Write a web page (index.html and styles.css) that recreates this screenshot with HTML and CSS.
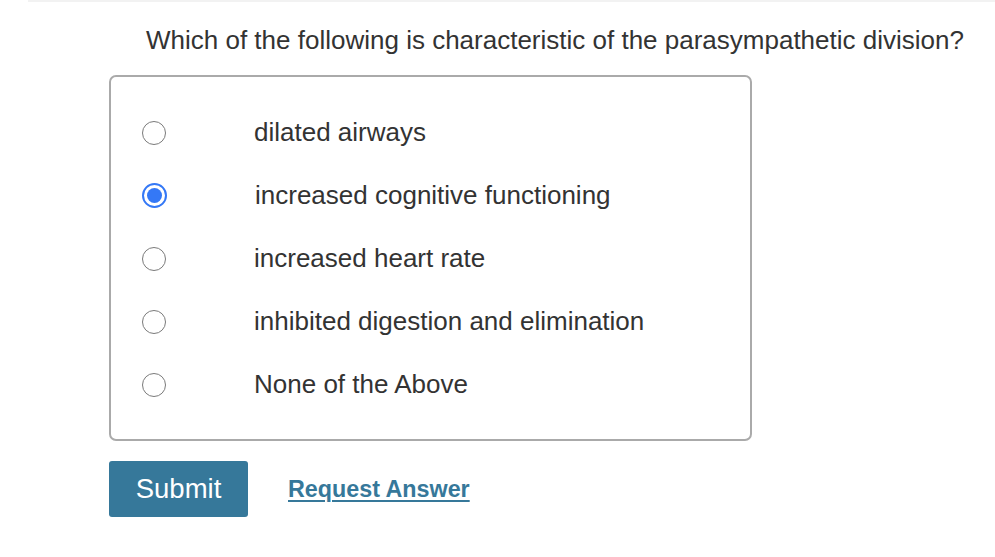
FILE: index.html
```html
<!DOCTYPE html>
<html>
<head>
<meta charset="utf-8">
<link rel="stylesheet" href="styles.css">
</head>
<body>
<div class="topline"></div>
<main class="page">
  <h1 class="question">Which of the following is characteristic of the parasympathetic division?</h1>
  <div class="options">
    <label class="option"><span class="radio"></span><span class="text">dilated airways</span></label>
    <label class="option"><span class="radio checked"></span><span class="text">increased cognitive functioning</span></label>
    <label class="option"><span class="radio"></span><span class="text">increased heart rate</span></label>
    <label class="option"><span class="radio"></span><span class="text">inhibited digestion and elimination</span></label>
    <label class="option"><span class="radio"></span><span class="text">None of the Above</span></label>
  </div>
  <div class="actions">
    <button class="submit">Submit</button>
    <a class="request" href="#">Request Answer</a>
  </div>
</main>
</body>
</html>
```
FILE: styles.css
```css
html, body {
  margin: 0;
  padding: 0;
  background: #fff;
}
body {
  font-family: "Liberation Sans", Arial, sans-serif;
  color: #333;
}
.topline {
  height: 2px;
  margin-left: 28px;
  background: #f2f2f2;
}
.page {
  padding-left: 109px;
}
.question {
  margin: 23px 0 0 37px;
  font-size: 26px;
  font-weight: normal;
  line-height: 30px;
  color: #333;
}
.options {
  margin-top: 20px;
  width: 639px;
  height: 362px;
  border: 2px solid #aaa;
  border-radius: 7px;
  box-sizing: content-box;
  display: flex;
  flex-direction: column;
}
.option {
  display: flex;
  align-items: center;
  height: 63px;
  flex: none;
}
.option:first-child {
  margin-top: 24px;
}
.radio {
  width: 22px;
  height: 22px;
  border: 1.5px solid #7a7a7a;
  border-radius: 50%;
  margin-left: 31px;
  flex: none;
  box-sizing: content-box;
  position: relative;
}
.radio.checked {
  border: 2px solid #3478f6;
  width: 21px;
  height: 21px;
}
.radio.checked::after {
  content: "";
  position: absolute;
  left: 3px;
  top: 3px;
  width: 15px;
  height: 15px;
  border-radius: 50%;
  background: #3478f6;
}
.text {
  margin-left: 88px;
  font-size: 26px;
  color: #333;
}
.actions {
  margin-top: 20px;
  display: flex;
  align-items: center;
}
.submit {
  width: 139px;
  height: 56px;
  background: #36789a;
  border: none;
  border-radius: 3px;
  color: #fff;
  font-family: "Liberation Sans", Arial, sans-serif;
  font-size: 27.5px;
  padding: 0;
}
.request {
  margin-left: 40px;
  font-size: 23.3px;
  font-weight: bold;
  color: #36789a;
  text-decoration: underline;
  text-underline-offset: 3px;
  text-decoration-thickness: 2px;
}
```
